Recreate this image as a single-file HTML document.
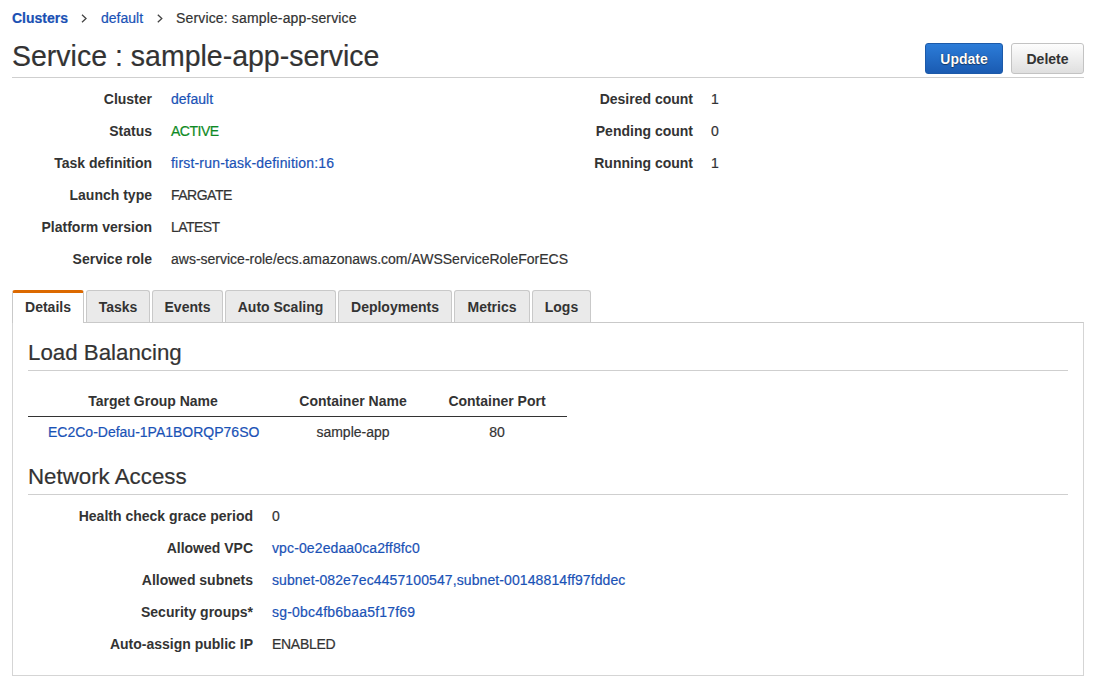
<!DOCTYPE html>
<html><head><meta charset="utf-8">
<style>
*{box-sizing:border-box;margin:0;padding:0}
html,body{width:1105px;height:689px;overflow:hidden;background:#fff}
body{font-family:"Liberation Sans",sans-serif;color:#333;font-size:14px;position:relative}
.abs{position:absolute;white-space:nowrap}
a{color:#1a52b6;text-decoration:none}
.bc{top:9px;font-size:14px;line-height:18px}
.bc b{color:#1a50b4}
.sep{color:#555;font-size:14px}
.title{left:12px;top:38px;font-size:28.5px;transform:scaleY(1.06);transform-origin:0 27.8px;line-height:36px;color:#333}
.hr{position:absolute;height:1px;background:#cfcfcf}
.btn{position:absolute;top:43px;height:31px;border-radius:3px;font-weight:bold;font-size:14px;text-align:center;line-height:30px}
.upd{left:925px;width:78px;background:linear-gradient(#2c7cd8,#1a5bb2);border:1px solid #1c5aa9;color:#fff;text-shadow:0 0 1px rgba(0,0,0,.6),0 1px 1px rgba(0,0,0,.4)}
.del{left:1011px;width:73px;background:linear-gradient(#fdfdfd,#dfdfdf);border:1px solid #c3c3c3;color:#333}
.lbl{font-weight:bold;text-align:right;color:#333}
.val{color:#333}
.lnk{color:#1a52b6}
.grn{color:#0e8a24}
.tabs{position:absolute;top:290px;left:12px}
.tab{position:absolute;top:0;height:32px;background:#eaeaea;border:1px solid #c9c9c9;border-bottom:none;border-radius:3px 3px 0 0;font-weight:bold;font-size:14px;line-height:33px;text-align:center;color:#333}
.tab.act{background:#fff;border-top:3px solid #dc6900;line-height:29px;height:33px}
.panel{position:absolute;left:12px;top:322px;width:1072px;height:354px;border:1px solid #d5d5d5;border-top:1px solid #c9c9c9}
.h2{font-size:22.3px;line-height:26px;color:#333}
.th{font-weight:bold;text-align:center}
.abs:not(.lbl):not(.th){-webkit-text-stroke:0.2px currentColor}
</style></head><body>
<div class="abs bc" style="left:12px"><b>Clusters</b></div>
<svg class="abs" style="left:80px;top:13px" width="8" height="11"><polyline points="2,1.8 6,5.5 2,9.2" fill="none" stroke="#444" stroke-width="1.3"/></svg>
<div class="abs bc" style="left:101px"><a>default</a></div>
<svg class="abs" style="left:156px;top:13px" width="8" height="11"><polyline points="1.8,1.8 5.8,5.5 1.8,9.2" fill="none" stroke="#444" stroke-width="1.3"/></svg>
<div class="abs bc" style="left:176px;letter-spacing:0.15px">Service: sample-app-service</div>

<div class="abs title">Service : sample-app-service</div>
<div class="btn upd">Update</div>
<div class="btn del">Delete</div>
<div class="hr" style="left:12px;top:77px;width:1072px"></div>

<div class="abs lbl" style="right:953px;top:91px">Cluster</div>
<div class="abs lnk" style="left:171px;top:91px">default</div>
<div class="abs lbl" style="right:953px;top:123px">Status</div>
<div class="abs grn" style="left:171px;top:123px;letter-spacing:-0.5px">ACTIVE</div>
<div class="abs lbl" style="right:953px;top:155px">Task definition</div>
<div class="abs lnk" style="left:171px;top:155px;letter-spacing:0.19px">first-run-task-definition:16</div>
<div class="abs lbl" style="right:953px;top:187px">Launch type</div>
<div class="abs val" style="left:171px;top:187px;letter-spacing:-0.5px">FARGATE</div>
<div class="abs lbl" style="right:953px;top:219px">Platform version</div>
<div class="abs val" style="left:171px;top:219px;letter-spacing:-0.55px">LATEST</div>
<div class="abs lbl" style="right:953px;top:251px">Service role</div>
<div class="abs val" style="left:171px;top:251px">aws-service-role/ecs.amazonaws.com/AWSServiceRoleForECS</div>

<div class="abs lbl" style="right:412px;top:91px">Desired count</div>
<div class="abs val" style="left:711px;top:91px">1</div>
<div class="abs lbl" style="right:412px;top:123px">Pending count</div>
<div class="abs val" style="left:711px;top:123px">0</div>
<div class="abs lbl" style="right:412px;top:155px">Running count</div>
<div class="abs val" style="left:711px;top:155px">1</div>

<div class="panel"></div>
<div class="tabs">
  <div class="tab act" style="left:0;width:72px">Details</div>
  <div class="tab" style="left:74px;width:64px">Tasks</div>
  <div class="tab" style="left:140px;width:71px">Events</div>
  <div class="tab" style="left:213px;width:111px">Auto Scaling</div>
  <div class="tab" style="left:326px;width:114px">Deployments</div>
  <div class="tab" style="left:442px;width:76px">Metrics</div>
  <div class="tab" style="left:520px;width:59px">Logs</div>
</div>

<div class="abs h2" style="left:28px;top:340px">Load Balancing</div>
<div class="hr" style="left:28px;top:370px;width:1040px"></div>
<div class="abs th" style="left:28px;width:250px;top:393px">Target Group Name</div>
<div class="abs th" style="left:278px;width:150px;top:393px">Container Name</div>
<div class="abs th" style="left:428px;width:138px;top:393px">Container Port</div>
<div class="hr" style="left:28px;top:416px;width:539px;background:#333"></div>
<div class="abs lnk" style="left:48px;top:424px">EC2Co-Defau-1PA1BORQP76SO</div>
<div class="abs" style="left:278px;width:150px;top:424px;text-align:center">sample-app</div>
<div class="abs" style="left:428px;width:138px;top:424px;text-align:center">80</div>

<div class="abs h2" style="left:28px;top:464px">Network Access</div>
<div class="hr" style="left:28px;top:494px;width:1040px"></div>
<div class="abs lbl" style="right:852px;top:508px">Health check grace period</div>
<div class="abs val" style="left:272px;top:508px">0</div>
<div class="abs lbl" style="right:852px;top:540px">Allowed VPC</div>
<div class="abs lnk" style="left:272px;top:540px;letter-spacing:0.12px">vpc-0e2edaa0ca2ff8fc0</div>
<div class="abs lbl" style="right:852px;top:572px">Allowed subnets</div>
<div class="abs lnk" style="left:272px;top:572px;letter-spacing:0.1px">subnet-082e7ec4457100547,subnet-00148814ff97fddec</div>
<div class="abs lbl" style="right:852px;top:604px">Security groups*</div>
<div class="abs lnk" style="left:272px;top:604px;letter-spacing:0.2px">sg-0bc4fb6baa5f17f69</div>
<div class="abs lbl" style="right:852px;top:636px">Auto-assign public IP</div>
<div class="abs val" style="left:272px;top:636px;letter-spacing:-0.3px">ENABLED</div>
</body></html>
